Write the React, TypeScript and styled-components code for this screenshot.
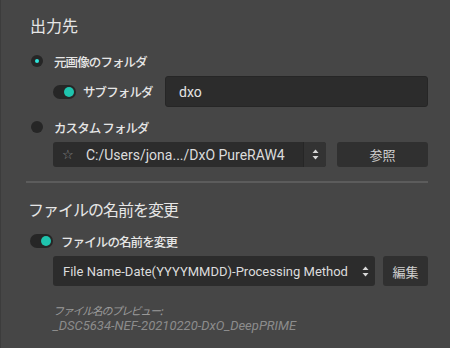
import { FunctionComponent } from "react";
import styled, { createGlobalStyle } from "styled-components";

const GlobalStyle = createGlobalStyle`
  html, body {
    margin: 0;
    padding: 0;
    background: #464646;
  }
  body {
    font-family: "Roboto", "Noto Sans CJK JP", sans-serif;
    color: #dedede;
  }
`;

const App: FunctionComponent = () => {
  return (
    <>
      <GlobalStyle />
      <Page>
        {/* 出力先 */}
        <Section>
          <Title>出力先</Title>
          <Row>
            <Radio $checked />
            <Label>元画像のフォルダ</Label>
          </Row>
          <SubRow $spaced>
            <ToggleGroup>
              <Toggle />
              <Label>サブフォルダ</Label>
            </ToggleGroup>
            <TextBox>dxo</TextBox>
          </SubRow>
          <Row>
            <Radio />
            <Label>カスタム フォルダ</Label>
          </Row>
          <SubRow>
            <Select>
              <Star>☆</Star>
              <SelectText>C:/Users/jona.../DxO PureRAW4</SelectText>
              <Spinner>
                <Arrows />
              </Spinner>
            </Select>
            <Button $width={91}>参照</Button>
          </SubRow>
        </Section>

        <Divider />

        {/* ファイルの名前を変更 */}
        <Section>
          <Title $second>ファイルの名前を変更</Title>
          <Row $toggle>
            <Toggle />
            <Label>ファイルの名前を変更</Label>
          </Row>
          <SubRow $tall>
            <Select $tall>
              <SelectText $small>File Name-Date(YYYYMMDD)-Processing Method</SelectText>
              <Arrows />
            </Select>
            <Button $width={45} $tall>
              編集
            </Button>
          </SubRow>
          <Preview>
            <PreviewLabel>ファイル名のプレビュー:</PreviewLabel>
            <PreviewValue>_DSC5634-NEF-20210220-DxO_DeepPRIME</PreviewValue>
          </Preview>
        </Section>
      </Page>
    </>
  );
};

export default App;

const Arrows: FunctionComponent = () => (
  <svg width="7" height="11" viewBox="0 0 7 11">
    <path d="M3.5 0.5 L6.5 4 L0.5 4 Z" fill="#d8d8d8" />
    <path d="M3.5 10.5 L6.5 7 L0.5 7 Z" fill="#d8d8d8" />
  </svg>
);

const Page = styled.div`
  width: 450px;
  height: 348px;
  box-sizing: border-box;
  padding: 14px 22px 0 29px;
  border-left: 1px solid #3c3c3c;
  overflow: hidden;
`;

const Section = styled.div`
  display: flex;
  flex-direction: column;
`;

const Title = styled.div<{ $second?: boolean }>`
  font-family: "Noto Sans CJK JP", sans-serif;
  font-size: 16px;
  line-height: 22px;
  letter-spacing: ${(p) => (p.$second ? "-1px" : "0")};
  color: #e6e6e6;
  margin-left: ${(p) => (p.$second ? "-2px" : "0")};
  margin-bottom: ${(p) => (p.$second ? "10px" : "14px")};
`;

const Row = styled.div<{ $toggle?: boolean }>`
  display: flex;
  align-items: center;
  gap: ${(p) => (p.$toggle ? "8px" : "11px")};
  height: 22px;
  margin-left: ${(p) => (p.$toggle ? "0" : "1px")};
`;

const SubRow = styled.div<{ $tall?: boolean; $spaced?: boolean }>`
  display: flex;
  align-items: center;
  gap: ${(p) => (p.$tall ? "8px" : "11px")};
  margin: 4px 0 ${(p) => (p.$spaced ? "9px" : p.$tall ? "0" : "4px")} 23px;
`;

const ToggleGroup = styled.div`
  display: flex;
  align-items: center;
  gap: 7px;
  width: 101px;
  flex-shrink: 0;
`;

const Label = styled.span`
  font-family: "Noto Sans CJK JP", sans-serif;
  font-size: 12.5px;
  font-weight: 500;
  letter-spacing: -0.9px;
  color: #e6e6e6;
  white-space: nowrap;
`;

const Radio = styled.span<{ $checked?: boolean }>`
  width: 12px;
  height: 12px;
  border-radius: 50%;
  background: #262626;
  display: flex;
  align-items: center;
  justify-content: center;
  flex-shrink: 0;
  &::after {
    content: "";
    width: 4px;
    height: 4px;
    border-radius: 50%;
    background: ${(p) => (p.$checked ? "#2ee6dc" : "transparent")};
  }
`;

const Toggle = styled.span`
  width: 23px;
  height: 14px;
  border-radius: 7px;
  background: #262626;
  position: relative;
  flex-shrink: 0;
  &::after {
    content: "";
    position: absolute;
    right: 2px;
    top: 2px;
    width: 10px;
    height: 10px;
    border-radius: 50%;
    background: #1fc4ae;
  }
`;

const TextBox = styled.div`
  flex: 1;
  height: 31px;
  box-sizing: border-box;
  background: #2c2c2c;
  border: 1px solid #262626;
  border-radius: 3px;
  display: flex;
  align-items: center;
  padding-left: 13px;
  font-size: 14px;
  color: #e4e4e4;
`;

const Select = styled.div<{ $tall?: boolean }>`
  flex: 1;
  height: ${(p) => (p.$tall ? "30px" : "25px")};
  box-sizing: border-box;
  background: #2c2c2c;
  border-radius: 3px;
  display: flex;
  align-items: center;
  padding-left: ${(p) => (p.$tall ? "10px" : "9px")};
  padding-right: ${(p) => (p.$tall ? "6px" : "0")};
  overflow: hidden;
`;

const Star = styled.span`
  font-family: "DejaVu Sans", sans-serif;
  font-size: 13px;
  color: #8a8a8a;
  width: 24px;
`;

const SelectText = styled.span<{ $small?: boolean }>`
  flex: 1;
  font-size: ${(p) => (p.$small ? "13px" : "14px")};
  color: #dcdcdc;
  white-space: nowrap;
`;

const Spinner = styled.span`
  width: 22px;
  height: 25px;
  background: #333333;
  border-left: 1px solid #262626;
  display: flex;
  align-items: center;
  justify-content: center;
`;

const Button = styled.div<{ $width: number; $tall?: boolean }>`
  width: ${(p) => p.$width}px;
  flex-shrink: 0;
  height: ${(p) => (p.$tall ? "30px" : "25px")};
  box-sizing: border-box;
  background: #303030;
  border-radius: 3px;
  display: flex;
  align-items: center;
  justify-content: center;
  font-family: "Noto Sans CJK JP", sans-serif;
  font-size: 13px;
  color: #cfcfcf;
`;

const Divider = styled.div`
  height: 2px;
  background: #5c5c5c;
  margin: 10px 0 15px -4px;
`;

const Preview = styled.div`
  display: flex;
  flex-direction: column;
  margin: 16px 0 0 23px;
  font-style: italic;
  line-height: 16px;
  color: #9a9a9a;
`;

const PreviewLabel = styled.span`
  font-family: "Noto Sans CJK JP", sans-serif;
  font-size: 11px;
  letter-spacing: -1.3px;
`;

const PreviewValue = styled.span`
  font-size: 13px;
  color: #8c8c8c;
`;
